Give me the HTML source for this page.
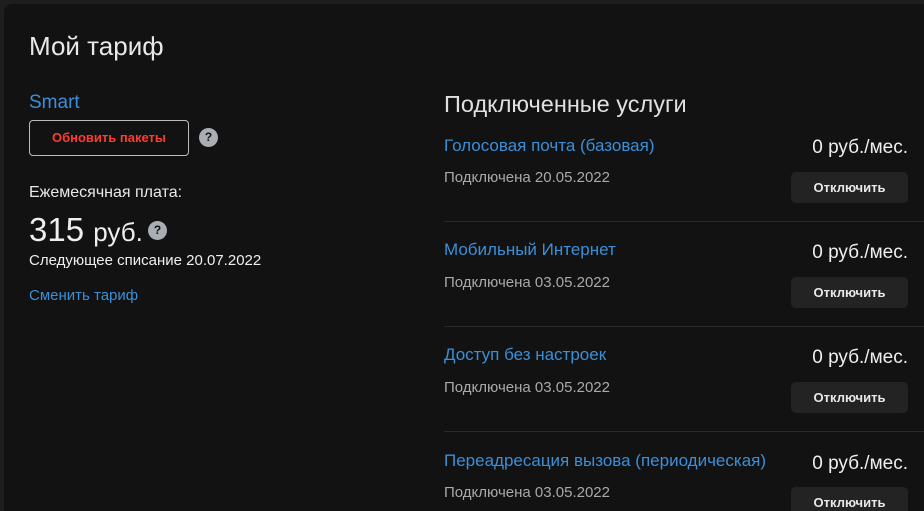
<!DOCTYPE html>
<html><head><meta charset="utf-8"><style>
html,body{margin:0;width:924px;height:511px;overflow:hidden;}
body{background:#1e1e1e;font-family:"Liberation Sans",sans-serif;position:relative;}
.card{position:absolute;left:4px;top:4px;width:930px;height:507px;background:#121212;border-radius:8px 0 0 0;}
.a{position:absolute;white-space:nowrap;}
.blue{color:#3b8fd9;}
.q{position:absolute;width:19px;height:19px;border-radius:50%;background:#a9aeb5;color:#121212;font-weight:bold;font-size:12px;text-align:center;line-height:19px;}
.btn{position:absolute;left:791px;width:117px;height:31px;background:#232323;border-radius:5px;color:#e8e8e8;font-weight:bold;font-size:13px;text-align:center;line-height:31px;}
.sep{position:absolute;left:444px;width:480px;height:1px;background:#2a2a2a;}
.t{font-size:17px;left:444px;}
.d{font-size:15px;color:#a9a9a9;left:444px;}
.p{font-size:19px;color:#eee;right:16px;}
</style></head><body>
<div class="card"></div>
<div class="a" style="left:29px;top:31px;font-size:26px;color:#e8e8e8">Мой тариф</div>
<div class="a blue" style="left:29px;top:92px;font-size:19px">Smart</div>
<div class="a" style="left:29px;top:120px;width:158px;height:34px;border:1px solid #bbb;border-radius:4px;color:#ff3b2f;font-weight:bold;font-size:13px;text-align:center;line-height:34px">Обновить пакеты</div>
<div class="q" style="left:199px;top:128px">?</div>
<div class="a" style="left:29px;top:184px;font-size:16px;color:#e8e8e8">Ежемесячная плата:</div>
<div class="a" style="left:29px;top:211px;font-size:33px;color:#eee">315 <span style="font-size:26px">руб.</span></div>
<div class="q" style="left:148px;top:221px">?</div>
<div class="a" style="left:29px;top:252px;font-size:15px;color:#eee">Следующее списание 20.07.2022</div>
<div class="a blue" style="left:29px;top:287px;font-size:15px">Сменить тариф</div>
<div class="a" style="left:444px;top:91px;font-size:23.5px;color:#e0e0e0">Подключенные услуги</div>

<div class="a blue t" style="top:136px">Голосовая почта (базовая)</div>
<div class="a p" style="top:137px">0 руб./мес.</div>
<div class="a d" style="top:169px">Подключена 20.05.2022</div>
<div class="btn" style="top:172px">Отключить</div>
<div class="sep" style="top:221px"></div>

<div class="a blue t" style="top:240px">Мобильный Интернет</div>
<div class="a p" style="top:242px">0 руб./мес.</div>
<div class="a d" style="top:274px">Подключена 03.05.2022</div>
<div class="btn" style="top:277px">Отключить</div>
<div class="sep" style="top:326px"></div>

<div class="a blue t" style="top:345px">Доступ без настроек</div>
<div class="a p" style="top:347px">0 руб./мес.</div>
<div class="a d" style="top:379px">Подключена 03.05.2022</div>
<div class="btn" style="top:382px">Отключить</div>
<div class="sep" style="top:431px"></div>

<div class="a blue t" style="top:451px">Переадресация вызова (периодическая)</div>
<div class="a p" style="top:453px">0 руб./мес.</div>
<div class="a d" style="top:484px">Подключена 03.05.2022</div>
<div class="btn" style="top:487px">Отключить</div>
</body></html>
